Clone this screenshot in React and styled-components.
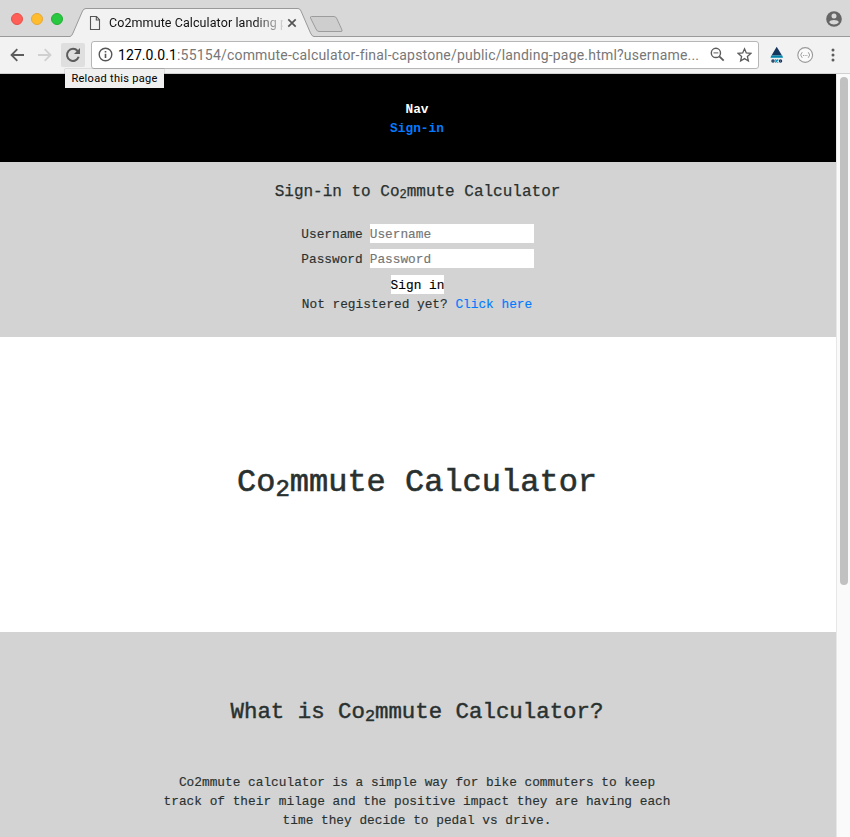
import React from "react";
import styled, { createGlobalStyle } from "styled-components";

const GlobalStyle = createGlobalStyle`
  * { box-sizing: border-box; }
  body { margin: 0; background: #fff; }
`;

const Window = styled.div`
  width: 850px;
  height: 837px;
  overflow: hidden;
  display: flex;
  flex-direction: column;
  font-family: Roboto, sans-serif;
`;

const TabStrip = styled.div`
  height: 37px;
  flex: none;
  display: flex;
  background: #d8d8d8;
  box-shadow: inset 0 -1px 0 #999;
`;

const TrafficLights = styled.div`
  width: 70px;
  display: flex;
  gap: 8px;
  padding: 13px 0 0 11px;
`;

const Light = styled.span`
  width: 12px;
  height: 12px;
  border-radius: 50%;
  background: ${(p) => p.$fill};
  border: 1px solid ${(p) => p.$edge};
`;

const Tab = styled.div`
  position: relative;
  width: 244px;
  display: flex;
  align-items: center;
  padding: 8px 0 0 19px;
`;

const TabShape = styled.svg`
  position: absolute;
  inset: 0;
`;

const TabContent = styled.div`
  position: relative;
  display: flex;
  align-items: center;
`;

const TabTitle = styled.div`
  width: 174px;
  margin: 0 4px 0 7px;
  overflow: hidden;
  white-space: nowrap;
  font-size: 12.5px;
  letter-spacing: 0.09px;
  line-height: 18px;
  color: #111;
  mask-image: linear-gradient(90deg, #000 145px, transparent 178px);
`;

const NewTab = styled.svg`
  margin: 15px 0 0 -5px;
`;

const Profile = styled.svg`
  margin: 11px 8px 0 auto;
`;

const Toolbar = styled.div`
  height: 37px;
  flex: none;
  display: flex;
  align-items: center;
  padding: 0 0 1px 5px;
  background: #f2f2f2;
  border-bottom: 1px solid #d0d0d0;
`;

const ToolButton = styled.div`
  position: relative;
  width: 24px;
  height: 24px;
  margin-right: ${(p) => p.$gap || 0}px;
  display: flex;
  align-items: center;
  justify-content: center;
  border-radius: 2px;
  background: ${(p) => (p.$hovered ? "#dfdfdf" : "transparent")};
`;

const Tooltip = styled.div`
  position: absolute;
  top: 26px;
  left: 4px;
  z-index: 2;
  width: 99px;
  height: 19px;
  background: #f0f0f0;
  box-shadow: 0 0 1px rgba(0, 0, 0, 0.5);
  color: #000;
  font-size: 11px;
  letter-spacing: 0.3px;
  line-height: 19px;
  text-align: center;
  white-space: nowrap;
`;

const AddressBar = styled.div`
  width: 668px;
  height: 28px;
  display: flex;
  align-items: center;
  padding-left: 6px;
  background: #fff;
  border: 1px solid #b6b6b6;
  border-radius: 3px;
`;

const Url = styled.div`
  flex: none;
  width: 592px;
  margin-left: 5px;
  white-space: nowrap;
  font-size: 14px;
  letter-spacing: 0.2px;
  color: #777;
`;

const UrlHost = styled.span`
  color: #000;
  letter-spacing: 0.08px;
`;

const AddressIcon = styled.svg`
  flex: none;
  margin-right: ${(p) => p.$gap || 0}px;
`;

const Extensions = styled.div`
  display: flex;
  align-items: center;
  margin-left: 9px;
`;

const Viewport = styled.div`
  flex: 1;
  min-height: 0;
  display: flex;
`;

const Page = styled.main`
  flex: 1;
  overflow: hidden;
  text-align: center;
  font-family: "Liberation Mono", "Courier New", monospace;
  font-size: 12.8px;
  line-height: 19.2px;
  color: #293130;
  -webkit-text-stroke-width: 0.15px;
`;

const Scrollbar = styled.div`
  width: 14px;
  padding: 3px 2px 0 3px;
  background: #fafafa;
  border-left: 1px solid #e7e7e7;
`;

const Thumb = styled.div`
  width: 8px;
  height: 508px;
  border-radius: 4px;
  background: #c1c1c1;
`;

const Nav = styled.nav`
  height: 88px;
  padding: 25.6px 2px 0 0;
  background: #000;
  color: #fff;
  font-weight: 700;
  -webkit-text-stroke-width: 0;
`;

const Link = styled.a`
  color: #007bff;
  text-decoration: none;
`;

const Sub = styled.sub`
  position: relative;
  bottom: -0.2em;
  font-size: 75%;
  line-height: 0;
  vertical-align: baseline;
`;

const SignIn = styled.section`
  height: 175px;
  padding: 21px 1px 0 0;
  background: lightgray;
`;

const FormTitle = styled.h4`
  margin: 0 0 23px;
  font-size: 16px;
  font-weight: 500;
  line-height: 18px;
  -webkit-text-stroke-width: 0.25px;
`;

const Field = styled.label`
  display: flex;
  justify-content: center;
  gap: 7px;
  height: 19px;
  margin-bottom: 6px;
  line-height: 21px;
`;

const Input = styled.input`
  width: 164px;
  height: 19px;
  padding: 2px 0 0;
  border: 0;
  background: #fff;
  font: inherit;
  line-height: 17px;

  &::placeholder {
    color: #757575;
    opacity: 1;
  }
`;

const Submit = styled.button`
  display: block;
  height: 19px;
  margin: 7px auto 0;
  padding: 2px 0 0;
  border: 0;
  background: #fff;
  color: #000;
  font: inherit;
  line-height: 17px;
`;

const Register = styled.div`
  padding: 1px 1px 0 0;
`;

const Hero = styled.section`
  height: 295px;
  display: flex;
  justify-content: center;
  align-items: center;
  padding: 0 2px 4px 0;
  background: #fff;
`;

const HeroTitle = styled.h1`
  margin: 0;
  font-size: 32px;
  font-weight: 500;
  line-height: 35.2px;
  -webkit-text-stroke-width: 0.6px;
`;

const About = styled.section`
  height: 260px;
  padding: 68px 2px 0 0;
  background: lightgray;
`;

const AboutTitle = styled.h2`
  margin: 0 0 48px;
  font-size: 22.4px;
  font-weight: 500;
  line-height: 25px;
  -webkit-text-stroke-width: 0.45px;
`;

const AboutText = styled.p`
  width: 514px;
  margin: 0 auto;
`;

const Brand = () => (
  <>Co<Sub>2</Sub>mmute Calculator</>
);

export default function App() {
  return (
    <Window>
      <GlobalStyle />
      <TabStrip>
        <TrafficLights>
          <Light $fill="#ff5f57" $edge="#e8504a" />
          <Light $fill="#ffbd2e" $edge="#e5a83a" />
          <Light $fill="#28c840" $edge="#24ae36" />
        </TrafficLights>
        <Tab>
          <TabShape width="244" height="37">
            <path d="M0 37V36.500Q2 36 3 33L12.500 11Q13.500 8.500 16 8.500H228Q230 8.500 231 11L240.500 33Q242 36.500 244 36.500V37Z" fill="#f2f2f2" />
            <path d="M0 36.500Q2 36 3 33L12.500 11Q13.500 8.500 16 8.500H228Q230 8.500 231 11L240.500 33Q242 36.500 244 36.500" fill="none" stroke="#999" />
          </TabShape>
          <TabContent>
            <svg width="13" height="16" fill="none" stroke="#555" strokeWidth="1.100">
              <path d="M1.500 1.500H7.500L10.500 4.700V14.500H1.500ZM7.300 1.500V5H10.500" />
            </svg>
            <TabTitle>Co2mmute Calculator landing p</TabTitle>
            <svg width="10" height="10" stroke="#555" strokeWidth="1.700">
              <path d="M1.300 1.300L8.700 8.700M8.700 1.300L1.300 8.700" />
            </svg>
          </TabContent>
        </Tab>
        <NewTab width="36" height="19">
          <path d="M2.500 1.500H25Q27 1.500 28 4L33 15Q33.500 16.500 32 16.500H10Q8 16.500 7 14L1.500 3Q1 1.500 2.500 1.500Z" fill="#cecece" stroke="#9c9c9c" />
        </NewTab>
        <Profile width="16" height="16">
          <circle cx="8" cy="8" r="7.800" fill="#666" />
          <circle cx="8" cy="5" r="2.500" fill="#d8d8d8" />
          <path d="M3.200 11.300C3.500 8.300 12.500 8.300 12.800 11.300C10.500 14.300 5.500 14.300 3.200 11.300Z" fill="#d8d8d8" />
        </Profile>
      </TabStrip>

      <Toolbar>
        <ToolButton $gap={4}>
          <svg width="16" height="16" fill="none" stroke="#5c5c5c" strokeWidth="1.800">
            <path d="M15 8H2.500M8.300 2.200L2.500 8L8.300 13.800" />
          </svg>
        </ToolButton>
        <ToolButton $gap={4}>
          <svg width="16" height="16" fill="none" stroke="#d0d0d0" strokeWidth="1.800">
            <path d="M1 8H13.500M7.700 2.200L13.500 8L7.700 13.800" />
          </svg>
        </ToolButton>
        <ToolButton $gap={6} $hovered>
          <svg width="16" height="16">
            <path d="M12.600 4A6 6 0 1 0 13.700 9.800" fill="none" stroke="#5c5c5c" strokeWidth="2" />
            <path d="M15 1V7H9Z" fill="#5c5c5c" />
          </svg>
          <Tooltip>Reload this page</Tooltip>
        </ToolButton>
        <AddressBar>
          <AddressIcon width="15" height="15">
            <circle cx="7.500" cy="7.500" r="6.300" fill="none" stroke="#555" strokeWidth="1.400" />
            <path d="M7.500 6.700V11M7.500 4V5.500" stroke="#555" strokeWidth="1.600" />
          </AddressIcon>
          <Url>
            <UrlHost>127.0.0.1</UrlHost>:55154/commute-calculator-final-capstone/public/landing-page.html?username...
          </Url>
          <AddressIcon width="15" height="15" $gap={12} fill="none" stroke="#5c5c5c" strokeWidth="1.400">
            <circle cx="5.900" cy="5.900" r="4.600" />
            <path d="M3.500 5.900H8.300" strokeWidth="1" />
            <path d="M9.300 9.300L13.700 13.700" strokeWidth="1.800" />
          </AddressIcon>
          <AddressIcon width="15" height="16" fill="none" stroke="#5c5c5c" strokeWidth="1.300">
            <path d="M7.500 1.800L9.300 6L13.800 6.400L10.400 9.400L11.400 14L7.500 11.600L3.600 14L4.600 9.400L1.200 6.400L5.700 6Z" />
          </AddressIcon>
        </AddressBar>
        <Extensions>
          <svg width="18" height="18">
            <path d="M8.700 0.700L14 9.500H3.500Z" fill="#14365f" />
            <path d="M3.200 9.500H14.300L15 11.800H2.500Z" fill="#0085ac" />
            <g fill="none" stroke="#14365f" strokeWidth="1.300">
              <circle cx="5" cy="15" r="1.100" />
              <path d="M7.300 13.500L10.200 16.500M10.200 13.500L7.300 16.500" stroke="#0797bf" />
              <circle cx="12.500" cy="15" r="1.100" />
            </g>
          </svg>
          <svg width="38" height="18" fill="none" stroke="#999">
            <circle cx="19.200" cy="9" r="7.400" strokeWidth="1.100" fill="#fafafa" />
            <path d="M16.500 6.500Q15.100 6.500 15.400 8L14.500 9L15.400 10Q15.100 11.500 16.500 11.500M21.900 6.500Q23.300 6.500 23 8L23.900 9L23 10Q23.300 11.500 21.900 11.500M17 9.500H18M18.700 9.500H19.700M20.400 9.500H21.400" strokeWidth="0.900" />
          </svg>
          <svg width="18" height="18" fill="#5c5c5c">
            <circle cx="9" cy="4" r="1.500" />
            <circle cx="9" cy="9" r="1.500" />
            <circle cx="9" cy="14" r="1.500" />
          </svg>
        </Extensions>
      </Toolbar>

      <Viewport>
        <Page>
          <Nav>
            <div>Nav</div>
            <Link>Sign-in</Link>
          </Nav>
          <SignIn>
            <FormTitle>Sign-in to <Brand /></FormTitle>
            <Field>Username<Input placeholder="Username" /></Field>
            <Field>Password<Input type="password" placeholder="Password" /></Field>
            <Submit>Sign in</Submit>
            <Register>Not registered yet? <Link>Click here</Link></Register>
          </SignIn>
          <Hero>
            <HeroTitle><Brand /></HeroTitle>
          </Hero>
          <About>
            <AboutTitle>What is <Brand />?</AboutTitle>
            <AboutText>
              Co2mmute calculator is a simple way for bike commuters to keep track of
              their milage and the positive impact they are having each time they
              decide to pedal vs drive.
            </AboutText>
          </About>
        </Page>
        <Scrollbar><Thumb /></Scrollbar>
      </Viewport>
    </Window>
  );
}
